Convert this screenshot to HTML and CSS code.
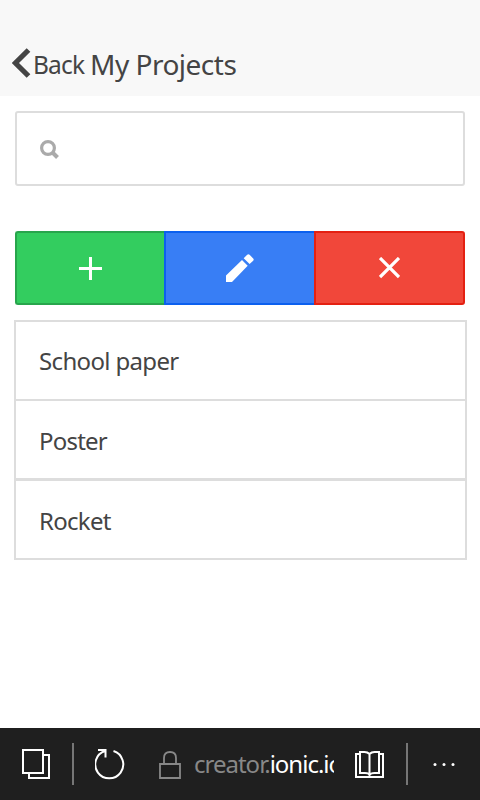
FILE: index.html
```html
<!DOCTYPE html>
<html lang="en">
<head>
<meta charset="utf-8">
<title>My Projects</title>
<link rel="stylesheet" href="styles.css">
</head>
<body>
<header class="header">
  <svg class="chevron" width="19" height="30" viewBox="0 0 19 30"><path d="M16.500 2 3.400 15 16.500 28" fill="none" stroke="#444" stroke-width="5.200"/></svg>
  <span class="back">Back</span>
  <h1 class="title">My Projects</h1>
</header>
<main class="content">
  <div class="search">
    <svg width="20" height="20" viewBox="0 0 20 20" fill="none" stroke="#aaa"><circle cx="8" cy="9" r="6.400" stroke-width="3.200"/><path d="m12.500 13.500 5 5" stroke-width="4"/></svg>
  </div>
  <div class="button-bar">
    <div class="button add"><svg width="23" height="23" viewBox="0 0 23 23"><path d="M11.500 0v23M0 11.500h23" stroke="#fff" stroke-width="3"/></svg></div>
    <div class="button edit"><svg width="30" height="30" viewBox="0 0 30 30" fill="#fff"><path d="M1 22.500 17 7l5.700 5.700L7 29H1zM18.700 5.300l3.500-3.500q1.200-1 2.400 0l3.600 3.600q1 1.200 0 2.400l-3.600 3.300z"/></svg></div>
    <div class="button remove"><svg width="21" height="22" viewBox="0 0 21 22"><path d="m1 1 19 19M20 1 1 20" stroke="#fff" stroke-width="3.200"/></svg></div>
  </div>
  <ul class="list">
    <li class="item"><span>School paper</span></li>
    <li class="item"><span>Poster</span></li>
    <li class="item last"><span>Rocket</span></li>
  </ul>
</main>
<footer class="toolbar">
  <svg class="tabs" width="28" height="32" viewBox="0 0 28 32" fill="none" stroke="#fff" stroke-width="2"><path d="M1 2h20v23H1zM21 7h6v23H7v-5"/></svg>
  <i class="divider"></i>
  <svg class="reload" width="32" height="32" viewBox="0 0 32 32" fill="none" stroke="#fff" stroke-width="2"><path d="M18.500 3A14 14 0 1 1 10 3M3 2h7.500v7.500"/></svg>
  <svg class="lock" width="22" height="28" viewBox="0 0 22 28" fill="none" stroke="#888" stroke-width="1.800"><path d="M1 13h20v14H1zM5 13V7q0-6 6-6t6 6v6"/></svg>
  <div class="url"><span class="sub">creator.</span><span class="domain">ionic.io</span></div>
  <svg class="book" width="30" height="28" viewBox="0 0 30 28" fill="none" stroke="#fff" stroke-width="2"><path d="M5 3H1v23h27V3h-4M14.500 24V3q-2-2-5-2H5v21h5q4 0 4.500 2 1-2 5-2H24V1h-4.500q-3 0-5 2"/></svg>
  <i class="divider second"></i>
  <svg class="more" width="22" height="4" viewBox="0 0 22 4" fill="#fff"><circle cx="2" cy="2.500" r="1.500"/><circle cx="11" cy="2.500" r="1.500"/><circle cx="20" cy="2.500" r="1.500"/></svg>
</footer>
</body>
</html>
```
FILE: styles.css
```css
* { box-sizing: border-box; }
body {
  margin: 0;
  height: 800px;
  display: flex;
  flex-direction: column;
  background: #fff;
  color: #444;
  font-family: "Noto Sans", "Open Sans", sans-serif;
  overflow: hidden;
}
svg { display: block; flex: none; }
.header {
  height: 96px;
  padding: 48px 0 0 12px;
  display: flex;
  align-items: flex-start;
  background: #f8f8f8;
}
.back {
  margin-left: 2px;
  width: 57px;
  font-size: 24.5px;
  line-height: 34px;
  letter-spacing: -0.8px;
  white-space: nowrap;
}
.title {
  margin: -1px 0 0;
  font-size: 28px;
  font-weight: 400;
  line-height: 34px;
  letter-spacing: -0.5px;
  white-space: nowrap;
}
.content { flex: 1; padding: 15px 13px 0 14px; }
.search {
  width: 450px;
  height: 75px;
  margin-left: 1px;
  padding: 1px 0 0 23px;
  display: flex;
  align-items: center;
  border: 2px solid #ddd;
  border-radius: 3px;
}
.button-bar {
  display: grid;
  grid-template-columns: 149px 150px 151px;
  width: 450px;
  height: 74px;
  margin: 45px 0 15px 1px;
}
.button {
  display: flex;
  align-items: center;
  justify-content: center;
  border: 2px solid;
}
.add { background: #33cd5f; border-color: #28a54c; border-right: 0; border-radius: 3px 0 0 3px; }
.edit { background: #387ef5; border-color: #0c60ee; border-right: 0; }
.remove { background: #f1473a; border-color: #e42012; border-radius: 0 3px 3px 0; }
.list { margin: 0; padding: 0; list-style: none; border: 2px solid #ddd; }
.item {
  height: 79px;
  padding: 0 23px;
  display: flex;
  align-items: center;
  border-bottom: 2px solid #ddd;
  font-size: 24px;
  letter-spacing: -0.65px;
}
.item:nth-child(2) { border-bottom-width: 3px; height: 80px; padding-top: 1px; letter-spacing: -0.8px; }
.last { height: 77px; border-bottom: 0; padding-top: 1px; letter-spacing: -0.7px; }
.toolbar {
  height: 72px;
  display: flex;
  align-items: center;
  background: #1f1f1f;
}
.tabs { margin-left: 22px; }
.divider { width: 2px; height: 42px; background: #767676; margin-left: 22px; }
.second { margin-left: 21px; }
.reload { margin-left: 21px; }
.lock { margin: 1px 0 0 32px; }
.url {
  width: 140px;
  margin-left: 13px;
  overflow: hidden;
  white-space: nowrap;
  font-size: 24px;
  line-height: 36px;
  letter-spacing: -1px;
}
.sub { color: #888; }
.domain { color: #fff; }
.book { margin: 1px 0 0 21px; }
.more { margin-left: 25px; }
```
